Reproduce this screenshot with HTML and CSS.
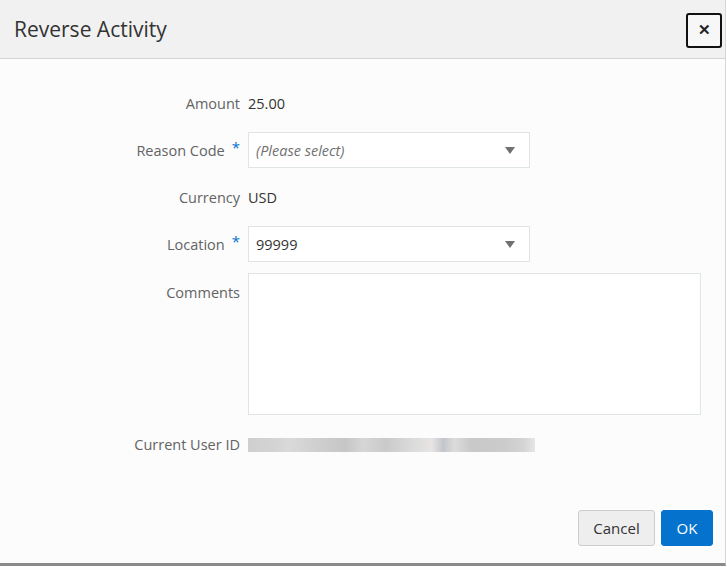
FILE: index.html
```html
<!DOCTYPE html>
<html lang="en">
<head>
    <meta charset="UTF-8">
    <meta name="viewport" content="width=device-width, initial-scale=1.0">
    <title>Reverse Activity</title>
    <link rel="stylesheet" href="styles.css">
</head>
<body>

    <div class="dialog">
        <div class="dialog-header">
            <h1 class="dialog-title">Reverse Activity</h1>
            <button class="close-btn" title="Close">&#x2715;</button>
        </div>

        <div class="dialog-body">
            <div class="form-grid">
                <div class="label">Amount</div>
                <div class="value">25.00</div>

                <div class="label">Reason Code<span class="req">*</span></div>
                <div class="select placeholder">
                    <span>(Please select)</span>
                    <span class="arrow"></span>
                </div>

                <div class="label">Currency</div>
                <div class="value">USD</div>

                <div class="label">Location<span class="req">*</span></div>
                <div class="select">
                    <span>99999</span>
                    <span class="arrow"></span>
                </div>

                <div class="label label-top">Comments</div>
                <div class="textarea"></div>

                <div class="label">Current User ID</div>
                <div class="value"><div class="blurred"></div></div>
            </div>
        </div>

        <div class="dialog-footer">
            <button class="btn btn-cancel">Cancel</button>
            <button class="btn btn-ok">OK</button>
        </div>
    </div>

</body>
</html>
```

FILE: styles.css
```css
body {
    margin: 0;
    background-color: #ffffff;
    font-family: 'Open Sans', 'Noto Sans', Arial, sans-serif;
    font-size: 14.5px;
    color: #333333;
}
.dialog {
    width: 725px;
    height: 563px;
    background-color: #fcfcfc;
    border-right: 1px solid #d6d6d6;
    border-bottom: 3px solid #8a8a8a;
    display: flex;
    flex-direction: column;
}
.dialog-header {
    height: 58px;
    background-color: #f1f1f1;
    border-bottom: 1px solid #d3d3d3;
    display: flex;
    align-items: center;
    justify-content: space-between;
    padding: 0 3px 0 14px;
}
.dialog-title {
    margin: 0;
    font-size: 21px;
    font-weight: normal;
    color: #333333;
}
.close-btn {
    width: 36px;
    height: 35px;
    margin-top: 2px;
    border: 2px solid #111111;
    border-radius: 3px;
    background-color: #f7f7f7;
    font-size: 15px;
    font-weight: bold;
    color: #222222;
    cursor: pointer;
    padding: 0;
}
.dialog-body {
    flex: 1;
    padding-top: 26px;
}
.form-grid {
    display: grid;
    grid-template-columns: 240px 453px;
    column-gap: 8px;
    row-gap: 11px;
}
.label {
    min-height: 36px;
    display: flex;
    align-items: center;
    justify-content: flex-end;
    color: #636363;
}
.label-top {
    align-items: flex-start;
    padding-top: 10px;
    min-height: 0;
}
.req {
    color: #0572ce;
    font-size: 15px;
    align-self: flex-start;
    margin: 5px 0 0 7px;
}
.value {
    min-height: 36px;
    display: flex;
    align-items: center;
    color: #333333;
}
.select {
    width: 282px;
    height: 36px;
    box-sizing: border-box;
    border: 1px solid #dfe4e7;
    background-color: #ffffff;
    display: flex;
    align-items: center;
    justify-content: space-between;
    padding: 0 14px 0 7px;
    color: #333333;
}
.select.placeholder {
    font-style: italic;
    color: #707070;
}
.arrow {
    width: 0;
    height: 0;
    border-left: 5px solid transparent;
    border-right: 5px solid transparent;
    border-top: 7px solid #707070;
}
.textarea {
    height: 142px;
    box-sizing: border-box;
    border: 1px solid #dfe4e7;
    background-color: #ffffff;
}
.blurred {
    width: 287px;
    height: 14px;
    margin-top: 2px;
    background: linear-gradient(to right,
        #cfcfcf 0%, #d4d4d4 10%, #dadada 14%, #cfcfcf 24%, #c6c6c6 34%,
        #d6d6d6 40%, #cacaca 48%, #dcdcdc 58%, #e8e4e4 64%, #c2c6cc 68%,
        #dcdcdc 72%, #c8c8c8 78%, #cccccc 90%, #d4d4d4 96%, #e6e6e6 100%);
}
.dialog-footer {
    display: flex;
    justify-content: flex-end;
    gap: 6px;
    padding: 0 12px 17px 0;
}
.btn {
    height: 36px;
    font-family: inherit;
    font-size: 15px;
    border-radius: 3px;
    cursor: pointer;
}
.btn-cancel {
    width: 77px;
    background-color: #eeeeee;
    border: 1px solid #c9cdd0;
    color: #333333;
}
.btn-ok {
    width: 52px;
    background-color: #0572ce;
    border: 1px solid #0572ce;
    color: #ffffff;
}
```
